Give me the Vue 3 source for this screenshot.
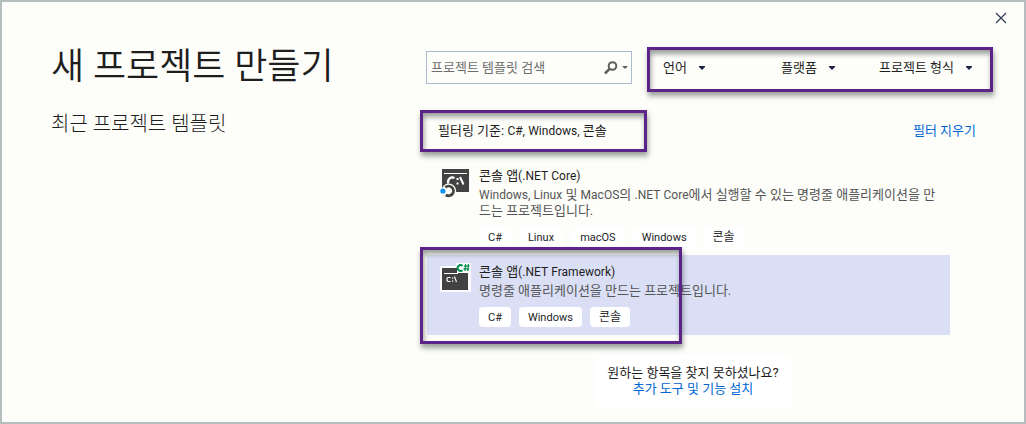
<script setup>
import { h } from 'vue'

const filters = [
  { id: 'language', label: '언어' },
  { id: 'platform', label: '플랫폼' },
  { id: 'type', label: '프로젝트 형식' }
]

const templates = [
  {
    id: 'core',
    name: '콘솔 앱(.NET Core)',
    description:
      'Windows, Linux 및 MacOS의 .NET Core에서 실행할 수 있는 명령줄 애플리케이션을 만드는 프로젝트입니다.',
    tags: ['C#', 'Linux', 'macOS', 'Windows', '콘솔'],
    selected: false
  },
  {
    id: 'framework',
    name: '콘솔 앱(.NET Framework)',
    description: '명령줄 애플리케이션을 만드는 프로젝트입니다.',
    tags: ['C#', 'Windows', '콘솔'],
    selected: true
  }
]

// Latin letters are set one pixel smaller than the Hangul around them.
const MixedText = (props) =>
  props.text
    .split(/([A-Za-z#.,()]*[A-Za-z][A-Za-z#.,()]*)/)
    .filter(Boolean)
    .map((run) => (/[A-Za-z]/.test(run) ? h('span', { class: 'latin' }, run) : run))
MixedText.props = ['text']
</script>

<template>
  <div class="dialog">
    <button class="close" type="button" aria-label="닫기">
      <svg width="12" height="12" viewBox="0 0 12 12">
        <path d="M1 1 L11 11 M11 1 L1 11" fill="none" stroke="#2f3a52" stroke-width="1.2" />
      </svg>
    </button>

    <aside class="recent">
      <h1>새 프로젝트 만들기</h1>
      <h2>최근 프로젝트 템플릿</h2>
    </aside>

    <main class="content">
      <div class="toolbar">
        <form class="search" @submit.prevent>
          <input type="text" placeholder="프로젝트 템플릿 검색" aria-label="프로젝트 템플릿 검색" />
          <button type="submit" aria-label="검색">
            <svg width="26" height="14" viewBox="0 0 26 14">
              <circle cx="9.5" cy="5" r="3.8" fill="none" stroke="#606060" stroke-width="2" />
              <path d="M6.8 7.7 L2 12.5" stroke="#606060" stroke-width="2.6" />
              <path d="M19 5 h6 l-3 3 z" fill="#606060" />
            </svg>
          </button>
        </form>
        <div class="filters">
          <div v-for="f in filters" :key="f.id" class="filter" :class="f.id">
            <select :aria-label="f.label">
              <option>{{ f.label }}</option>
            </select>
            <svg class="caret" width="6" height="4" viewBox="0 0 6 4">
              <path d="M0 0 h6 v1 l-3 3 l-3 -3 z" fill="#1b2245" />
            </svg>
          </div>
          <span class="callout callout-filters"></span>
        </div>
      </div>

      <div class="criteria">
        <p><MixedText text="필터링 기준: C#, Windows, 콘솔" /></p>
        <a href="#">필터 지우기</a>
        <span class="callout callout-criteria"></span>
      </div>

      <ul class="templates">
        <li v-for="t in templates" :key="t.id" class="template" :class="{ selected: t.selected }">
          <svg v-if="t.id === 'core'" class="icon" width="32" height="32" viewBox="0 0 32 32">
            <rect x="2" y="2" width="27" height="23" fill="#424242" />
            <path d="M4 6.5 h23" stroke="#fff" stroke-width="1" />
            <path d="M14.5 11 C11 9.5 7.5 11.5 8 16.5" fill="none" stroke="#fff" stroke-width="2.2" />
            <circle cx="8.8" cy="24" r="7.4" fill="#fdfdfa" />
            <path d="M16.5 11 h2 v2 h-2 z M16.5 15.5 h2 v2 h-2 z" fill="#fff" />
            <path d="M20 10 L23.5 17.5" stroke="#fff" stroke-width="2" />
            <path
              d="M5.4 20.4 A4.8 4.8 0 1 1 5.8 27.8"
              fill="none"
              stroke="#424242"
              stroke-width="2.8"
            />
            <circle cx="2.9" cy="24" r="2.6" fill="#1094f5" />
          </svg>
          <svg v-else class="icon" width="32" height="32" viewBox="0 0 32 32">
            <path d="M0 3 H16 V0 H31 V29 H0 z" fill="#fbfbfd" />
            <path d="M2 5 H17 V10 H28 V27 H2 z" fill="#424242" />
            <path d="M4 10.5 H18" stroke="#fff" stroke-width="1" />
            <path d="M10.5 14.5 H8 L7 15.5 V17.5 L8 18.5 H10.5" fill="none" stroke="#fff" stroke-width="1.1" />
            <path d="M12 14.5 h1.3 v1.3 h-1.3 z M12 17.4 h1.3 v1.3 h-1.3 z" fill="#fff" />
            <path d="M14.5 13.5 L16.5 19" stroke="#fff" stroke-width="1.1" />
            <path d="M22.5 2.8 A2.9 2.9 0 1 0 22.5 7.2" fill="none" stroke="#008a4b" stroke-width="2" />
            <path d="M25.7 1 L24.9 8 M28.5 1 L27.7 8 M23.8 3.2 H29.6 M23.4 5.9 H29.2" stroke="#008a4b" stroke-width="1.2" />
          </svg>
          <div class="details">
            <h3><MixedText :text="t.name" /></h3>
            <p><MixedText :text="t.description" /></p>
            <div class="tags">
              <span v-for="tag in t.tags" :key="tag" class="tag"><MixedText :text="tag" /></span>
            </div>
          </div>
          <span v-if="t.selected" class="callout callout-template"></span>
        </li>
      </ul>

      <div class="footer">
        <div class="more">
          <p>원하는 항목을 찾지 못하셨나요?</p>
          <a href="#">추가 도구 및 기능 설치</a>
        </div>
      </div>
    </main>
  </div>
</template>

<style>
body {
  margin: 0;
  background: #fdfdfa;
}
</style>

<style scoped>
.dialog {
  position: relative;
  display: grid;
  grid-template-columns: 424px minmax(0, 1fr);
  box-sizing: border-box;
  min-height: 100vh;
  border: 2px solid #b5bdbd;
  background: #fdfdfa;
  color: #1e1e1e;
  font-family: Roboto, "Noto Sans CJK KR", sans-serif;
  font-size: 13px;
  line-height: 16px;
}
h1, h2, h3, p, ul {
  margin: 0;
  padding: 0;
  font-weight: 400;
}
button, input, select {
  margin: 0;
  padding: 0;
  border: 0;
  background: transparent;
  color: inherit;
  font: inherit;
}
a {
  color: #0066d6;
  text-decoration: none;
}
:deep(.latin) {
  font-size: 12px;
  line-height: 1;
}
.close {
  position: absolute;
  top: 10px;
  right: 17px;
  display: flex;
}
.recent {
  padding: 41px 0 0 49px;
}
h1 {
  font-size: 36px;
  line-height: 48px;
  font-weight: 350;
}
h2 {
  margin-top: 19px;
  font-size: 20px;
  line-height: 28px;
  font-weight: 300;
}
.content {
  padding: 49px 32px 14px 0;
}
.toolbar {
  display: flex;
  justify-content: space-between;
}
.search {
  display: flex;
  align-items: center;
  box-sizing: border-box;
  width: 206px;
  height: 33px;
  padding: 0 2px 0 4px;
  border: 1px solid #adb9d0;
}
.search input {
  flex: 1;
  min-width: 0;
  outline: 0;
}
.search input::placeholder {
  color: #6d6d6d;
  opacity: 1;
}
.search button {
  display: flex;
}
.filters {
  position: relative;
  display: flex;
  align-items: center;
  width: 329px;
}
.filter {
  display: flex;
  align-items: center;
  gap: 12px;
}
.language {
  width: 118px;
}
.platform {
  width: 98px;
}
.filter select {
  appearance: none;
}
.callout {
  position: absolute;
  box-sizing: border-box;
  border: 3px solid #5c2388;
  box-shadow: 1px 4px 5px rgba(60, 70, 60, 0.5), inset 1px 4px 5px rgba(60, 70, 60, 0.5);
  pointer-events: none;
}
.callout-filters {
  top: -4px;
  right: -1px;
  bottom: -8px;
  left: -16px;
}
.criteria {
  position: relative;
  display: flex;
  justify-content: space-between;
  margin-top: 38px;
  padding: 0 16px 0 12px;
  line-height: 18px;
}
.callout-criteria {
  top: -12px;
  bottom: -12px;
  left: -6px;
  width: 227px;
}
.templates {
  margin: 19px 42px 0 1px;
  list-style: none;
}
.template {
  position: relative;
  display: flex;
  gap: 7px;
  padding: 8px 10px 8px 13px;
}
.template.selected {
  background: #dadff5;
}
.icon {
  flex: none;
}
.details {
  flex: 1;
  min-width: 0;
}
h3 {
  font-size: 13px;
  line-height: 18px;
}
.details p {
  margin-top: 2px;
  color: #555;
  word-break: break-all;
}
.tags {
  display: flex;
  gap: 8px;
  margin-top: 8px;
}
.tag {
  padding: 0 9px;
  border-radius: 4px;
  background: #fff;
  font-size: 12px;
  line-height: 20px;
}
.tag :deep(.latin) {
  font-size: 11px;
}
.callout-template {
  top: -8px;
  bottom: -9px;
  left: -7px;
  width: 262px;
}
.footer {
  display: flex;
  justify-content: center;
  margin-top: 20px;
  padding-right: 32px;
}
.more {
  padding: 10px 12px;
  background: #fff;
  text-align: center;
}
.more a {
  display: block;
}
</style>
